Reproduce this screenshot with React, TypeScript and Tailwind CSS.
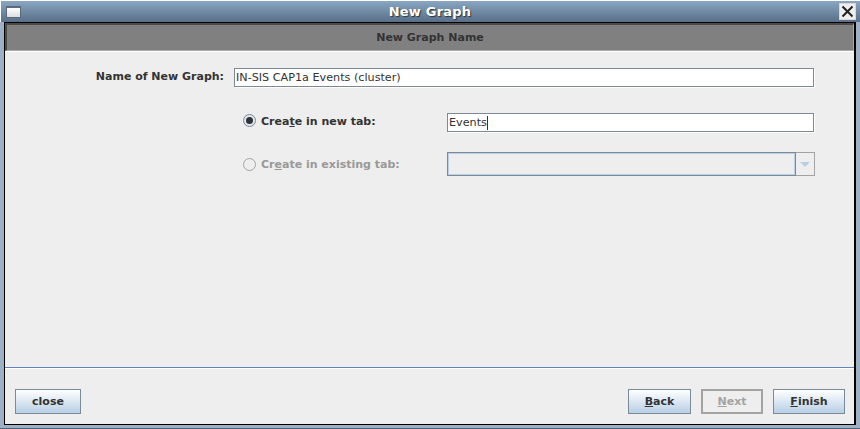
import React from "react"

const font = "font-['DejaVu_Sans',sans-serif]"

function WizardButton({ className, disabled, children }: { className: string; disabled?: boolean; children: React.ReactNode }) {
  if (disabled) {
    return (
      <div className={`${className} h-[25px] flex items-center justify-center border-2 border-[#a3a3a3] bg-[#eeeeee] pt-[2px] text-[11px] font-bold text-[#a3a3a3]`}>
        {children}
      </div>
    )
  }
  return (
    <div className={`${className} h-[25px] flex items-center justify-center border border-[#7a8a99] bg-gradient-to-b from-[#ffffff] to-[#b8cfe5] pt-[2px] text-[11px] font-bold text-[#333333]`}>
      {children}
    </div>
  )
}

function Field({ className, children }: { className: string; children?: React.ReactNode }) {
  return (
    <div className={`${className} flex items-center h-[19px] border border-[#7a8a99] bg-white pl-[1px] text-[11.2px] leading-none text-[#333333] shadow-[1px_1px_0_#ffffff]`}>
      {children}
    </div>
  )
}

export default function App() {
  return (
    <div className={`${font} w-[860px] h-[429px] flex flex-col overflow-hidden bg-[#9db0c4] border-b border-b-[#4f6276]`}>
      {/* title bar */}
      <div className="h-[22px] shrink-0 flex items-center justify-between border-t border-l border-white bg-gradient-to-b from-[#8aa6c2] to-[#587089] pl-[5px] pr-[4px]">
        <div className="w-[15px] h-[12px] border border-[#5a6a7a] border-t-2 bg-gradient-to-b from-[#ffffff] to-[#dddddd]" />
        <span className="text-[13px] font-bold tracking-[0.2px] text-white [text-shadow:1px_1px_1px_#333333]">New Graph</span>
        <div className="w-[17px] h-[17px] flex items-center justify-center bg-[#eeeeee] border border-[#d8d8d8]">
          <svg width="13" height="13" viewBox="0 0 13 13">
            <path d="M1.5 1.5 L11.5 11.5 M11.5 1.5 L1.5 11.5" stroke="#222222" strokeWidth="2" fill="none" />
          </svg>
        </div>
      </div>

      {/* window body */}
      <div className="h-[403px] shrink-0 mx-[4px] flex flex-col border border-black border-r-2 bg-[#eeeeee]">
        <div className="h-[28px] shrink-0 flex items-center justify-center border-t-2 border-l-2 border-[#4a4a4a] border-r border-r-[#aaaaaa] border-b border-b-[#aaaaaa] bg-[#808080] pt-[2px] text-[11px] font-bold text-[#333333]">
          New Graph Name
        </div>
        <div className="h-px shrink-0 bg-white" />

        <div className="flex-1 flex flex-col">
          <div className="flex items-start mt-[16px]">
            <span className="w-[219px] text-right text-[11px] leading-[18px] font-bold text-[#333333]">Name of New Graph:</span>
            <Field className="ml-[10px] w-[580px]">IN-SIS CAP1a Events (cluster)</Field>
          </div>

          <div className="flex items-start mt-[26px] ml-[238px]">
            <div className="mt-[1px] w-[13px] h-[13px] rounded-full border border-[#7a8a99] bg-[#dfe8f2] flex items-center justify-center">
              <div className="w-[7px] h-[7px] rounded-full bg-[#333333]" />
            </div>
            <span className="w-[186px] ml-[5px] text-[11px] leading-[17px] font-bold text-[#333333]">
              Crea<span className="underline">t</span>e in new tab:
            </span>
            <Field className="w-[367px]">
              Events<span className="w-px h-[14px] bg-[#333333]" />
            </Field>
          </div>

          <div className="flex items-center mt-[20px] ml-[238px]">
            <div className="w-[13px] h-[13px] rounded-full border border-[#a3a3a3]" />
            <span className="w-[186px] ml-[5px] pt-[2px] text-[11px] font-bold text-[#999999]">
              Cr<span className="underline">e</span>ate in existing tab:
            </span>
            <div className="w-[368px] h-[24px] flex">
              <div className="flex-1 border border-[#7a8a99]">
                <div className="h-full border border-[#b8cfe5] bg-[#eeeeee]" />
              </div>
              <div className="w-[19px] flex items-center justify-center border border-l-0 border-[#a3a3a3]">
                <svg width="10" height="5" viewBox="0 0 10 5">
                  <path d="M0 0 H10 L5 5 Z" fill="#b8cfe5" />
                </svg>
              </div>
            </div>
          </div>
        </div>

        <div className="h-px shrink-0 bg-[#6382bf]" />
        <div className="h-px shrink-0 bg-white" />

        <div className="h-[55px] shrink-0 flex items-start pt-[20px] pl-[10px]">
          <WizardButton className="w-[66px]">close</WizardButton>
          <div className="flex-1" />
          <WizardButton className="w-[63px]">
            <span><span className="underline">B</span>ack</span>
          </WizardButton>
          <WizardButton className="w-[62px] ml-[10px]" disabled>
            <span><span className="underline">N</span>ext</span>
          </WizardButton>
          <WizardButton className="w-[72px] ml-[10px] mr-[9px]">
            <span><span className="underline">F</span>inish</span>
          </WizardButton>
        </div>
      </div>
    </div>
  )
}
